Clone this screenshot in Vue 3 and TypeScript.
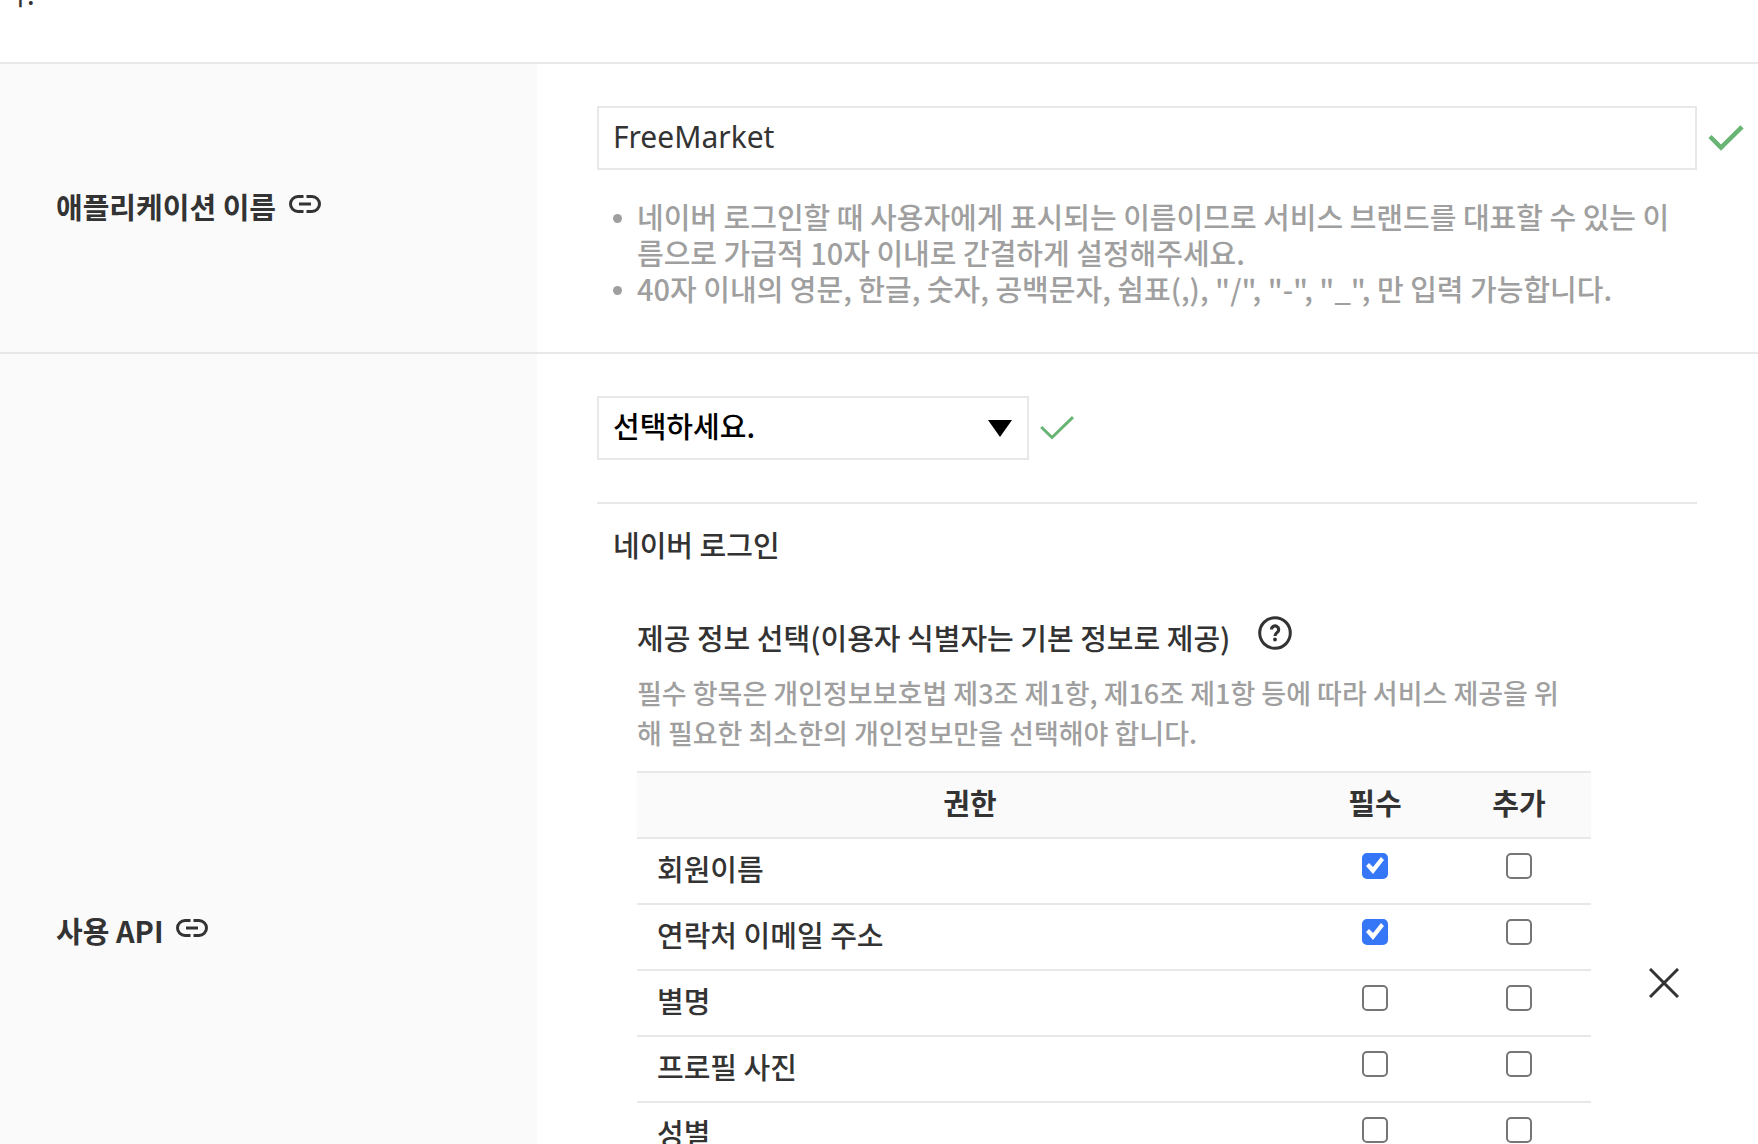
<script setup lang="ts">
import { ref } from 'vue'

interface Permission {
  id: string
  label: string
  required: boolean
  extra: boolean
}

const appName = ref('FreeMarket')
const api = ref('')
const permissions = ref<Permission[]>([
  { id: 'name', label: '회원이름', required: true, extra: false },
  { id: 'email', label: '연락처 이메일 주소', required: true, extra: false },
  { id: 'nickname', label: '별명', required: false, extra: false },
  { id: 'photo', label: '프로필 사진', required: false, extra: false },
  { id: 'gender', label: '성별', required: false, extra: false },
])
</script>

<template>
  <main class="page">
    <p class="intro">다.</p>

    <section class="row">
      <div class="side">
        <label class="side-title" for="app-name">애플리케이션 이름</label>
        <a class="anchor" href="#app-name" aria-label="애플리케이션 이름">
          <svg width="34" height="20" viewBox="0 0 34 20" fill="none" stroke="#333" stroke-width="3">
            <path d="M15.500 2.500H10a7.500 7.500 0 0 0 0 15h5.500M18.500 2.500H24a7.500 7.500 0 0 1 0 15h-5.500M11 10h12" />
          </svg>
        </a>
      </div>
      <div class="body">
        <div class="field">
          <input id="app-name" v-model="appName" class="text" type="text" />
          <svg class="tick" width="36" height="26" viewBox="0 0 36 26" fill="none" stroke="#68b473" stroke-width="4.500">
            <path d="M2 11.500L13 22.500L34 1.800" />
          </svg>
        </div>
        <ul class="notes">
          <li>네이버 로그인할 때 사용자에게 표시되는 이름이므로 서비스 브랜드를 대표할 수 있는 이름으로 가급적 10자 이내로 간결하게 설정해주세요.</li>
          <li>40자 이내의 영문, 한글, 숫자, 공백문자, 쉼표(,), "/", "-", "_", 만 입력 가능합니다.</li>
        </ul>
      </div>
    </section>

    <section class="row tall">
      <div class="side">
        <label class="side-title" for="api">사용 API</label>
        <a class="anchor" href="#api" aria-label="사용 API">
          <svg width="34" height="20" viewBox="0 0 34 20" fill="none" stroke="#333" stroke-width="3">
            <path d="M15.500 2.500H10a7.500 7.500 0 0 0 0 15h5.500M18.500 2.500H24a7.500 7.500 0 0 1 0 15h-5.500M11 10h12" />
          </svg>
        </a>
      </div>
      <div class="body">
        <div class="field">
          <div class="picker">
            <select id="api" v-model="api" class="select">
              <option value="">선택하세요.</option>
            </select>
            <svg class="caret" width="24" height="17" viewBox="0 0 24 17"><path d="M0 0h24L12 17z" /></svg>
          </div>
          <svg class="tick" width="34" height="24" viewBox="0 0 34 24" fill="none" stroke="#68b473" stroke-width="3">
            <path d="M1.200 11L12 21.500L33 1.200" />
          </svg>
        </div>

        <div class="panel">
          <div class="panel-main">
            <h2 class="panel-title">네이버 로그인</h2>
            <div class="scope">
              <div class="scope-head">
                <h3 class="scope-title">제공 정보 선택(이용자 식별자는 기본 정보로 제공)</h3>
                <button class="help" type="button" aria-label="도움말">
                  <svg width="34" height="34" viewBox="0 0 34 34" fill="none" stroke="#333">
                    <circle cx="17" cy="17" r="15.300" stroke-width="3" />
                    <path d="M13.500 13.500a3.600 3.600 0 1 1 5.600 3C17.500 17.600 17 18.300 17 20" stroke-width="3.200" />
                    <circle cx="17" cy="23.500" r="1.900" fill="#333" stroke="none" />
                  </svg>
                </button>
              </div>
              <p class="scope-desc">필수 항목은 개인정보보호법 제3조 제1항, 제16조 제1항 등에 따라 서비스 제공을 위해 필요한 최소한의 개인정보만을 선택해야 합니다.</p>
              <table class="grid">
                <thead>
                  <tr>
                    <th scope="col">권한</th>
                    <th scope="col" class="check-col">필수</th>
                    <th scope="col" class="check-col">추가</th>
                  </tr>
                </thead>
                <tbody>
                  <tr v-for="p in permissions" :key="p.id">
                    <td>{{ p.label }}</td>
                    <td class="check-col">
                      <input v-model="p.required" class="check" type="checkbox" :aria-label="`${p.label} 필수`" />
                    </td>
                    <td class="check-col">
                      <input v-model="p.extra" class="check" type="checkbox" :aria-label="`${p.label} 추가`" />
                    </td>
                  </tr>
                </tbody>
              </table>
            </div>
          </div>
          <button class="remove" type="button" aria-label="삭제">
            <svg width="30" height="30" viewBox="0 0 30 30" fill="none" stroke="#333" stroke-width="3">
              <path d="M1 1l28 28M29 1L1 29" />
            </svg>
          </button>
        </div>
      </div>
    </section>
  </main>
</template>

<style>
body {
  margin: 0;
  background: #fff;
}
</style>

<style scoped>
* {
  box-sizing: border-box;
}

.page {
  height: 100vh;
  overflow: hidden;
  color: #333;
  font-family: 'Noto Sans CJK KR', sans-serif;
  font-size: 29px;
  font-weight: 500;
  line-height: 36px;
}

.intro {
  display: flex;
  align-items: flex-end;
  height: 10px;
  margin: 0 0 52px;
  font-weight: 400;
}

.row {
  display: flex;
  border-top: 2px solid #e8e8e8;
}

.tall {
  min-height: 1158px;
}

.side {
  display: flex;
  flex: none;
  align-items: center;
  gap: 12px;
  width: 537px;
  padding: 0 56px 4px;
  background: #fafafa;
}

.side-title {
  font-weight: 700;
}

.anchor {
  display: flex;
  padding-bottom: 4px;
}

.body {
  flex: 1;
  min-width: 0;
  padding: 42px 61px 46px 60px;
}

.field {
  display: flex;
  align-items: center;
  gap: 11px;
  margin-right: -61px;
  padding-right: 14px;
}

.tick {
  flex: none;
}

.text {
  flex: 1;
  min-width: 0;
  height: 64px;
  padding: 0 14px 4px;
  border: 2px solid #e8e8e8;
  background: #fff;
  color: #333;
  font-family: 'Noto Sans', 'Noto Sans CJK KR', sans-serif;
  font-size: 30px;
}

.notes {
  margin: 28px 0 0;
  padding: 0 16px 0 40px;
  color: #9f9f9f;
  list-style: none;
  word-break: break-all;
}

.notes li {
  position: relative;
}

.notes li::before {
  content: '';
  position: absolute;
  top: 16px;
  left: -24px;
  width: 9px;
  height: 9px;
  border-radius: 50%;
  background: #9f9f9f;
}

.picker {
  position: relative;
  width: 432px;
}

.select {
  display: block;
  width: 100%;
  height: 64px;
  padding: 0 50px 6px 14px;
  border: 2px solid #e8e8e8;
  border-radius: 0;
  background: #fff;
  color: #000;
  font: inherit;
  appearance: none;
}

.caret {
  position: absolute;
  top: 24px;
  right: 17px;
  pointer-events: none;
}

.panel {
  display: flex;
  align-items: center;
  min-height: 960px;
  margin-top: 42px;
  border-top: 2px solid #e8e8e8;
}

.panel-main {
  flex: 1;
  align-self: stretch;
  min-width: 0;
  padding-top: 22px;
}

.panel-title {
  margin: 0;
  padding-left: 16px;
  font-size: 29px;
  font-weight: 500;
}

.scope {
  padding: 48px 0 0 40px;
}

.scope-head {
  display: flex;
  align-items: center;
  gap: 28px;
  height: 46px;
}

.scope-title {
  margin: 0;
  padding-top: 8px;
  font-size: 29px;
  font-weight: 500;
}

.help,
.remove {
  display: flex;
  flex: none;
  padding: 0;
  border: 0;
  background: none;
}

.remove {
  margin: 0 18px 0 58px;
}

.scope-desc {
  margin: 17px 0 18px;
  padding-right: 16px;
  color: #9f9f9f;
  font-size: 27px;
  line-height: 40px;
  word-break: break-all;
}

.grid {
  width: 100%;
  border-collapse: separate;
  border-spacing: 0;
  border-top: 2px solid #e8e8e8;
}

.grid th,
.grid td {
  height: 66px;
  padding: 0 20px 7px;
  border-bottom: 2px solid #e8e8e8;
  text-align: left;
}

.grid th {
  background: #fafafa;
  text-align: center;
}

.grid .check-col {
  width: 144px;
  text-align: center;
}

.grid td.check-col {
  padding-bottom: 10px;
}

.check {
  display: block;
  width: 26px;
  height: 26px;
  margin: 0 auto;
  border: 2px solid #767676;
  border-radius: 5px;
  background: #fff;
  appearance: none;
}

.check:checked {
  border-color: #3577f6;
  background: #3577f6;
}

.check:checked::before {
  content: '';
  display: block;
  width: 22px;
  height: 22px;
  background: #fff;
  clip-path: polygon(2px 11px, 5px 8px, 9px 12px, 17px 2px, 20px 5px, 9px 19px);
}
</style>
